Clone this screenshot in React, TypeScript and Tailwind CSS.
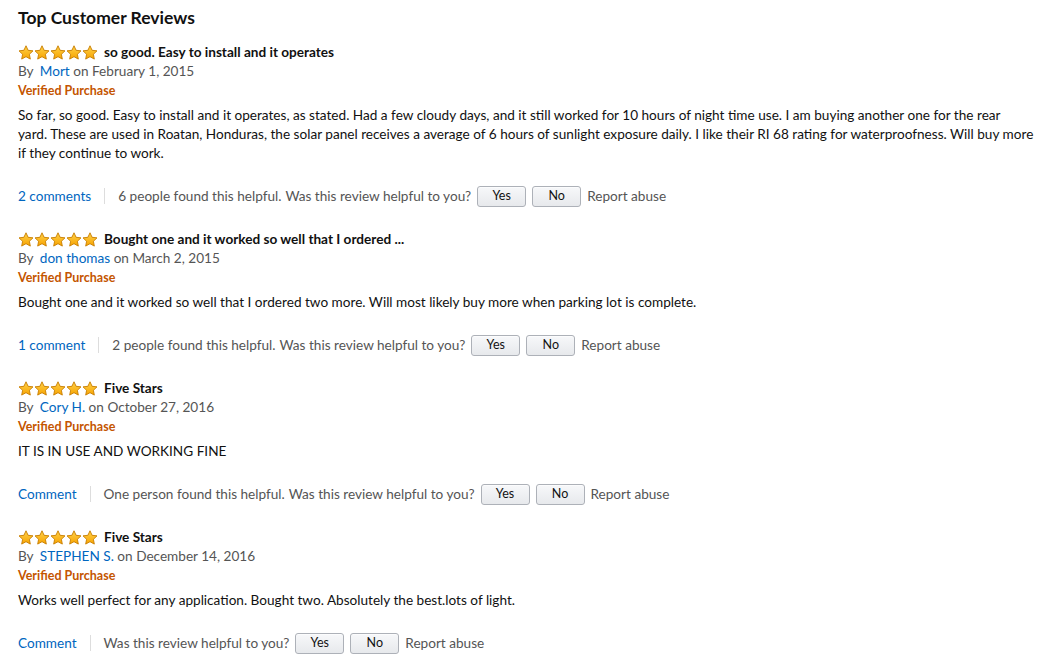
import React from 'react'

type Review = {
  title: string
  author: string
  date: string
  body: string
  comments: string
  helpful?: string
}

const reviews: Review[] = [
  {
    title: 'so good. Easy to install and it operates',
    author: 'Mort',
    date: 'February 1, 2015',
    body: 'So far, so good. Easy to install and it operates, as stated. Had a few cloudy days, and it still worked for 10 hours of night time use. I am buying another one for the rear\nyard. These are used in Roatan, Honduras, the solar panel receives a average of 6 hours of sunlight exposure daily. I like their RI 68 rating for waterproofness. Will buy more if they continue to work.',
    comments: '2 comments',
    helpful: '6 people found this helpful.',
  },
  {
    title: 'Bought one and it worked so well that I ordered ...',
    author: 'don thomas',
    date: 'March 2, 2015',
    body: 'Bought one and it worked so well that I ordered two more. Will most likely buy more when parking lot is complete.',
    comments: '1 comment',
    helpful: '2 people found this helpful.',
  },
  {
    title: 'Five Stars',
    author: 'Cory H.',
    date: 'October 27, 2016',
    body: 'IT IS IN USE AND WORKING FINE',
    comments: 'Comment',
    helpful: 'One person found this helpful.',
  },
  {
    title: 'Five Stars',
    author: 'STEPHEN S.',
    date: 'December 14, 2016',
    body: 'Works well perfect for any application. Bought two. Absolutely the best.lots of light.',
    comments: 'Comment',
  },
]

function Star() {
  return (
    <svg width="16" height="15" viewBox="0 0 24 23">
      <defs>
        <linearGradient id="sg" x1="0" y1="0" x2="0" y2="1">
          <stop offset="0" stopColor="#ffd24a" />
          <stop offset="1" stopColor="#f7a300" />
        </linearGradient>
      </defs>
      <path
        d="M12 1.2l3.2 6.9 7.5.9-5.5 5.2 1.4 7.4L12 17.9l-6.6 3.7 1.4-7.4L1.3 9l7.5-.9z"
        fill="url(#sg)"
        stroke="#c77d00"
        strokeWidth="1.4"
        strokeLinejoin="round"
      />
    </svg>
  )
}

function Btn({ label }: { label: string }) {
  return (
    <button className="h-[21px] w-[49px] rounded-[3px] border border-[#adb1b8] bg-gradient-to-b from-[#f7f8fa] to-[#e7e9ec] text-[12.5px] text-[#111] leading-none shadow-[0_1px_0_rgba(255,255,255,0.6)_inset]">
      {label}
    </button>
  )
}

function ReviewItem({ r }: { r: Review }) {
  return (
    <div className="flex flex-col">
      <div className="flex items-center h-[19px] gap-[6px]">
        <div className="flex">
          <Star />
          <Star />
          <Star />
          <Star />
          <Star />
        </div>
        <span className="font-bold text-[#111]">{r.title}</span>
      </div>
      <div className="h-[19px] text-[#555]">
        By <a className="text-[#0066c0] ml-[3px]">{r.author}</a> on {r.date}
      </div>
      <div className="h-[19px] text-[12.5px] font-bold text-[#c45500]">Verified Purchase</div>
      <p className="mt-[6px] text-[#111] whitespace-pre-line">{r.body}</p>
      <div className="mt-[22px] flex items-center h-[22px] text-[#555]">
        <a className="text-[#0066c0]">{r.comments}</a>
        <span className="mx-[13px] h-[16px] w-px bg-[#ddd]" />
        {r.helpful && <span className="mr-[4px]">{r.helpful}</span>}
        <span className="mr-[6px]">Was this review helpful to you?</span>
        <div className="flex gap-[6px]">
          <Btn label="Yes" />
          <Btn label="No" />
        </div>
        <span className="ml-[6px]">Report abuse</span>
      </div>
    </div>
  )
}

export default function App() {
  return (
    <div
      className="w-[1047px] h-[667px] bg-white overflow-hidden pl-[18px] pr-[4px] pt-[7px] text-[13.6px] leading-[19px]"
      style={{ fontFamily: 'Lato, "Noto Sans", sans-serif' }}
    >
      <h2 className="text-[17.5px] font-bold leading-[22px] text-[#111] mb-[14px]">Top Customer Reviews</h2>
      <div className="flex flex-col gap-[23px]">
        {reviews.map((r, i) => (
          <ReviewItem key={i} r={r} />
        ))}
      </div>
    </div>
  )
}
